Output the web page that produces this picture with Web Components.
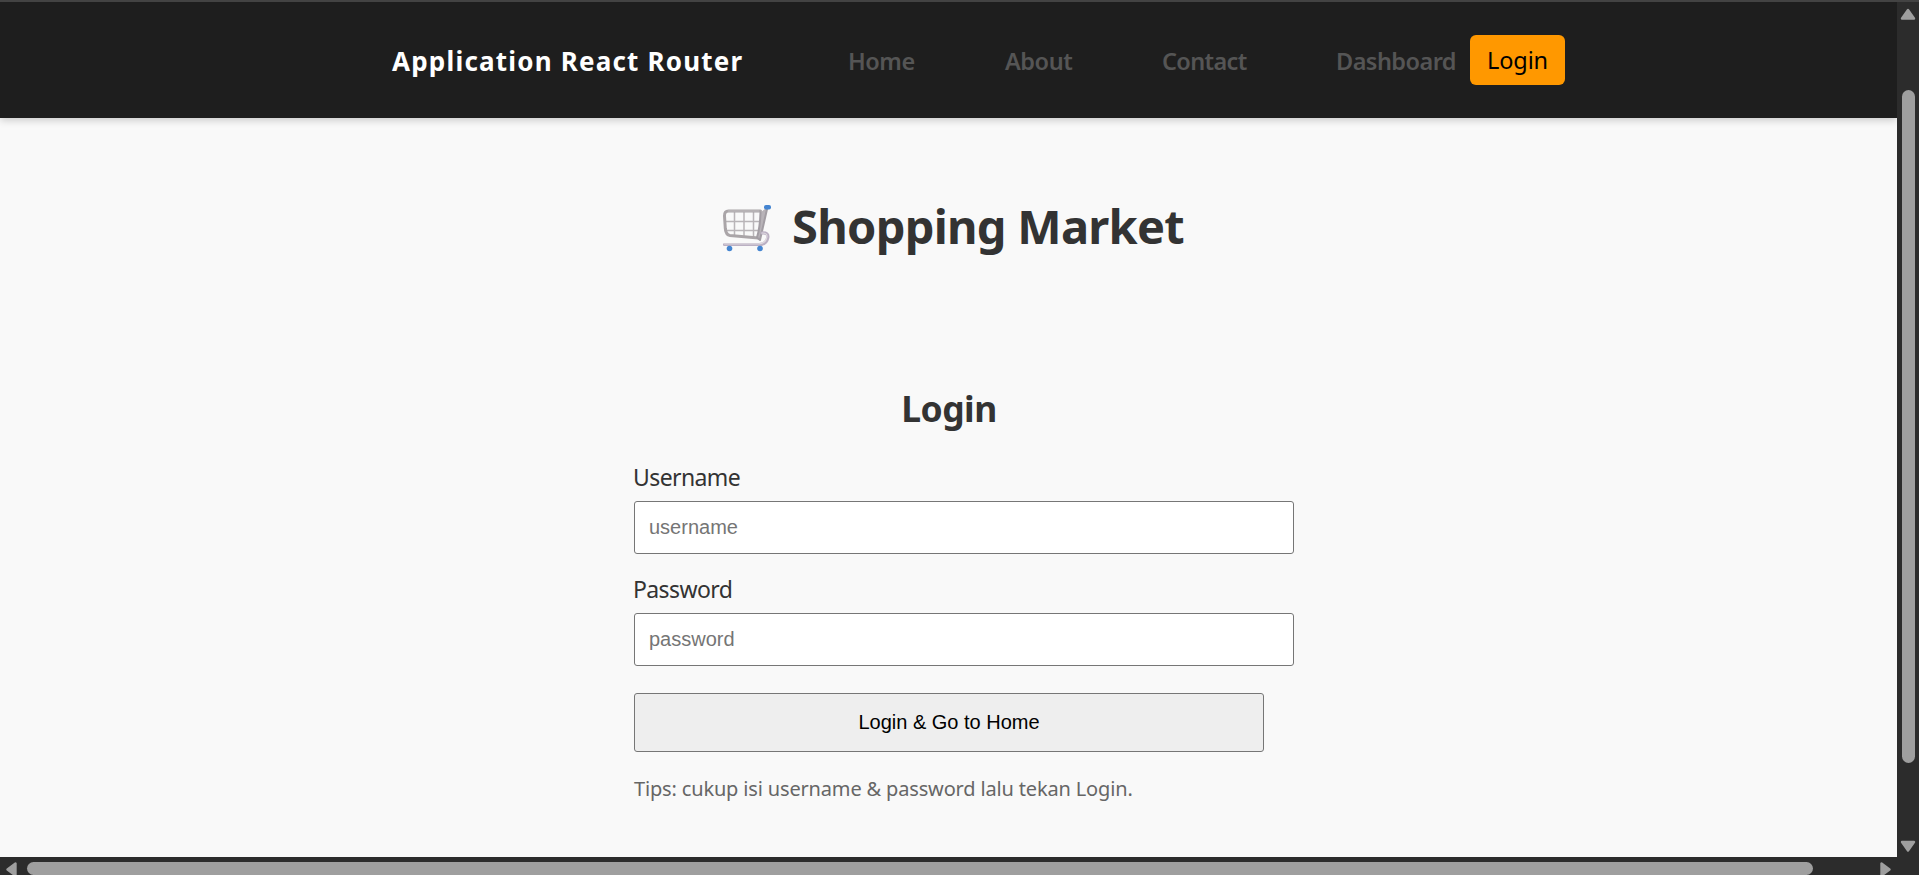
<!DOCTYPE html>
<html lang="id">
<head>
<meta charset="utf-8">
<title>Shopping Market</title>
<style>
html,body{margin:0;height:100%;overflow:hidden;background:#f9f9f9;font-family:"Noto Sans","Open Sans",sans-serif;color:#333}
</style>
</head>
<body>
<browser-frame>
  <site-header>
    <span slot="brand">Application React Router</span>
    <nav-link>Home</nav-link><nav-link>About</nav-link><nav-link style="letter-spacing:-.65px">Contact</nav-link><nav-link style="letter-spacing:-.55px">Dashboard</nav-link>
    <login-button>Login</login-button>
  </site-header>
  <market-title>Shopping Market</market-title>
  <login-form></login-form>
</browser-frame>
<script>
const define=(name,html)=>customElements.define(name,class extends HTMLElement{
  constructor(){super();this.attachShadow({mode:'open'}).innerHTML=html}
});

define('scroll-bar-y',`<style>
:host{display:flex;flex-direction:column;align-items:center;background:#2c2c2c;box-sizing:border-box;padding:6px 0 4px;overflow:hidden}
svg{display:block;flex:none}
.thumb{width:13px;height:673px;border-radius:6.5px;background:#9f9f9f;margin:70px 0 77px}
</style>
<svg width="16" height="12"><path d="M8 2 L14 10.5 H2Z" fill="#9f9f9f" stroke="#9f9f9f" stroke-width="2.4" stroke-linejoin="round"/></svg>
<div class="thumb"></div>
<svg width="16" height="12"><path d="M8 10.5 L14 2 H2Z" fill="#9f9f9f" stroke="#9f9f9f" stroke-width="2.4" stroke-linejoin="round"/></svg>`);

define('scroll-bar-x',`<style>
:host{display:flex;align-items:flex-start;background:#2c2c2c;box-sizing:border-box;padding:5px 0 0 5px;overflow:hidden}
svg{display:block;flex:none}
.thumb{flex:none;width:1786px;height:13px;border-radius:6.5px;background:#9f9f9f;margin:0 66px 0 10px}
</style>
<svg width="12" height="16"><path d="M2.5 7.5 L10.5 1.5 V13.5Z" fill="#9f9f9f" stroke="#9f9f9f" stroke-width="2.4" stroke-linejoin="round"/></svg>
<div class="thumb"></div>
<svg width="12" height="16"><path d="M10.5 7.5 L2.5 1.5 V13.5Z" fill="#9f9f9f" stroke="#9f9f9f" stroke-width="2.4" stroke-linejoin="round"/></svg>`);

define('browser-frame',`<style>
:host{display:grid;box-sizing:border-box;width:1919px;height:875px;grid-template:1fr 18px / 1fr 22px;border-top:2px solid #434343;background:#f9f9f9}
main{overflow:hidden}
scroll-bar-x{grid-column:1 / 3}
</style>
<main><slot></slot></main><scroll-bar-y></scroll-bar-y><scroll-bar-x></scroll-bar-x>`);

define('site-header',`<style>
:host{display:grid;box-sizing:border-box;height:116px;padding-left:392px;grid-template-columns:456px 157px 157px 174px 134px 95px;align-items:center;background:#1e1e1e;box-shadow:0 2px 8px rgba(0,0,0,.2);white-space:nowrap}
::slotted(span){color:#fff;font-size:26px;font-weight:700;letter-spacing:1.2px;line-height:36px;padding-top:2px}
</style><slot name="brand"></slot><slot></slot>`);

define('nav-link',`<style>
:host{display:block;color:#555;font-size:23.5px;font-weight:600;line-height:36px;letter-spacing:-.45px;padding-top:2px}
</style><slot></slot>`);

define('login-button',`<style>
:host{display:block;height:50px;border-radius:6px;background:#ff9800;color:#000;font-size:23.5px;letter-spacing:-.1px;line-height:51px;text-align:center}
</style><slot></slot>`);

define('market-title',`<style>
:host{display:flex;align-items:center;margin:78px 0 0 722px;height:60px;white-space:nowrap}
svg{flex:none;margin:3px 21px 0 0}
h1{margin:0;font-size:47px;line-height:60px;letter-spacing:-.72px}
</style>
<svg width="49" height="50" viewBox="0 0 49 50" fill="none" stroke-linecap="round" stroke-linejoin="round">
<path d="M12.5 9V32M22 9V33M31.5 9V34M3 18.5H38M3 27.5H36" stroke="#b9b5b8" stroke-width="1.5"/>
<path d="M38.5 8H6.5Q2.3 8 2.5 13L3.3 25.5Q4 32 8 32.6L36.5 35" stroke="#aaa5a8" stroke-width="3"/>
<path d="M38.5 9.5Q38 25 35 34.5L38 37L45.5 4" fill="#b8b3b8" stroke="#a29da3" stroke-width="2"/>
<path d="M6.5 8H37" stroke="#c2bfc1" stroke-width="1"/>
<path d="M40 30Q47 29.5 45.7 35Q44.5 41.5 37 41.5H2.5" stroke="#bbb0c3" stroke-width="3.2"/>
<path d="M40 30Q46 30 44.8 34.5Q43.5 40.3 37 40.8H2.5" stroke="#ded8df" stroke-width="1.2"/>
<rect x="42" y="2" width="7" height="4.4" rx="2" fill="#4485d1"/>
<circle cx="7.5" cy="45.5" r="2.8" fill="#4485d1"/><circle cx="38" cy="45.5" r="2.8" fill="#4485d1"/>
</svg><h1><slot></slot></h1>`);

define('form-field',`<style>
:host{display:block;margin-bottom:19px}
label{display:block;margin-left:-1px;font-size:23px;line-height:32px;letter-spacing:-.6px}
input{display:block;box-sizing:border-box;width:660px;height:53px;margin-top:8px;padding:0 14px;border:1px solid #767676;border-radius:3px;background:#fff;font:20px "Liberation Sans",Arial,sans-serif}
input::placeholder{color:#757575}
</style><label for="f"><slot></slot></label><input id="f">`);

define('login-form',`<style>
:host{display:block;width:630px;margin:128px 0 0 634px}
h2{margin:0 0 29px;font-size:35.5px;line-height:48px;text-align:center;letter-spacing:-.5px}
button{display:block;box-sizing:border-box;width:630px;height:59px;margin-top:27px;padding:0;border:1px solid #767676;border-radius:3px;background:#eee;color:#000;font:20px "Liberation Sans",Arial,sans-serif}
p{margin:23px 0 0;color:#666;font-size:20px;line-height:28px;letter-spacing:-.16px;white-space:nowrap}
</style>
<h2>Login</h2>
<form-field>Username</form-field>
<form-field>Password</form-field>
<button type="button">Login &amp; Go to Home</button>
<p>Tips: cukup isi username &amp; password lalu tekan Login.</p>`);

const form=document.querySelector('login-form').shadowRoot;
form.querySelectorAll('form-field').forEach((field,i)=>{
  const input=field.shadowRoot.querySelector('input');
  input.type=i?'password':'text';
  input.placeholder=i?'password':'username';
});
</script>
</body>
</html>
